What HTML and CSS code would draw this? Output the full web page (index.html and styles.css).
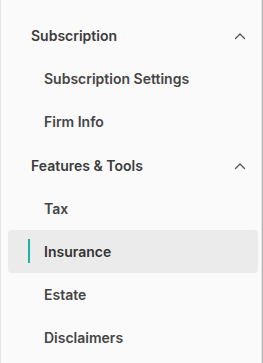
FILE: index.html
```html
<!DOCTYPE html>
<html>
<head>
<meta charset="utf-8">
<link rel="stylesheet" href="styles.css">
</head>
<body>
<nav class="sidebar">
  <div class="group">
    <div class="group-header">
      <span>Subscription</span>
      <svg class="chev" width="12" height="8" viewBox="0 0 12 8"><path d="M1.5 6.5 L6 2 L10.5 6.5" fill="none" stroke="#555" stroke-width="1.3" stroke-linecap="round" stroke-linejoin="round"/></svg>
    </div>
    <div class="item">Subscription Settings</div>
    <div class="item">Firm Info</div>
  </div>
  <div class="group group-2">
    <div class="group-header">
      <span>Features &amp; Tools</span>
      <svg class="chev" width="12" height="8" viewBox="0 0 12 8"><path d="M1.5 6.5 L6 2 L10.5 6.5" fill="none" stroke="#555" stroke-width="1.3" stroke-linecap="round" stroke-linejoin="round"/></svg>
    </div>
    <div class="item">Tax</div>
    <div class="item active"><span class="bar"></span>Insurance</div>
    <div class="item">Estate</div>
    <div class="item">Disclaimers</div>
  </div>
</nav>
</body>
</html>
```
FILE: styles.css
```css
html, body {
  margin: 0;
  padding: 0;
  background: #fafafa;
}
body {
  font-family: Inter, "Noto Sans", sans-serif;
  width: 263px;
  height: 363px;
  overflow: hidden;
}
.sidebar {
  box-sizing: border-box;
  width: 263px;
  height: 363px;
  border-left: 1px solid #e6e6e6;
  border-right: 1px solid #e2e2e2;
  box-shadow: inset -1px 0 0 #fdfdfd, 1px 0 0 #b5b5b5;
  margin-right: 1px;
  padding: 14px 3px 0 7px;
  background: #fafafa;
  width: 262px;
}
.group-2 {
  margin-top: 1px;
}
.group-header {
  height: 43px;
  display: flex;
  align-items: center;
  justify-content: space-between;
  padding: 0 12px 0 23px;
  font-size: 14px;
  font-weight: 600;
  color: #3b3b3b;
}
.chev {
  display: block;
}
.item {
  position: relative;
  height: 43px;
  display: flex;
  align-items: center;
  padding-left: 36px;
  font-size: 14px;
  font-weight: 600;
  color: #454545;
  border-radius: 4px;
}
.item.active {
  background: #ebebeb;
  color: #333;
}
.bar {
  position: absolute;
  left: 20px;
  top: 9px;
  width: 2px;
  height: 24px;
  background: #1db3a4;
}
```
